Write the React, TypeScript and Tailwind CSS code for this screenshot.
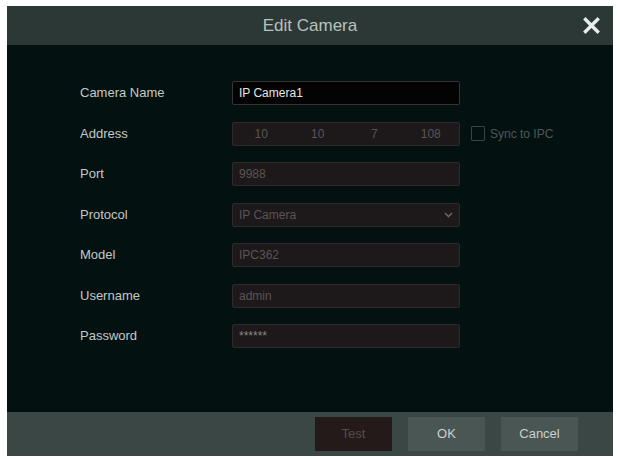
import { ReactNode } from 'react';

const font = { fontFamily: '"Liberation Sans", Arial, sans-serif' };

function Row({ label, children }: { label: string; children: ReactNode }) {
  return (
    <div className="flex items-center h-6">
      <div className="w-[152px] text-[13px] text-[#c4c8c6]">{label}</div>
      {children}
    </div>
  );
}

function Field({ value, dim = true }: { value: string; dim?: boolean }) {
  return (
    <div
      className={
        dim
          ? 'w-[228px] h-6 flex items-center px-[6px] bg-[#1d1819] border border-[#2a2b2a] rounded-[2px] text-[12px] text-[#5b5456]'
          : 'w-[228px] h-6 flex items-center px-[6px] bg-[#030303] border border-[#3a3334] rounded-[2px] text-[12px] text-[#e6e6e6]'
      }
    >
      {value}
    </div>
  );
}

export default function App() {
  return (
    <div className="w-[620px] h-[459px] bg-white pt-[6px] pl-[7px]" style={font}>
      <div className="w-[606px] h-[450px] flex flex-col bg-[#031211]">
        <div className="h-[39px] bg-[#2c3835] flex items-center justify-center relative">
          <span className="text-[17px] text-[#b9c1bd]">Edit Camera</span>
          <svg className="absolute right-[12px] top-[10px]" width="19" height="19" viewBox="0 0 19 19">
            <path d="M3.5 3.5 L15.5 15.5 M15.5 3.5 L3.5 15.5" stroke="#e8ecea" strokeWidth="3.4" strokeLinecap="square" />
          </svg>
        </div>

        <div className="flex-1 flex flex-col gap-[16.5px] pt-[36px] pl-[73px]">
          <Row label="Camera Name">
            <Field value="IP Camera1" dim={false} />
          </Row>
          <Row label="Address">
            <div className="w-[228px] h-6 flex items-center bg-[#1d1819] border border-[#2a2b2a] rounded-[2px] text-[12px] text-[#5b5456]">
              <span className="w-[57px] text-center">10</span>
              <span className="w-[57px] text-center">10</span>
              <span className="w-[57px] text-center">7</span>
              <span className="w-[57px] text-center">108</span>
            </div>
            <div className="flex items-center ml-[11px] gap-[5px]">
              <span className="w-[14px] h-[15px] border border-[#3a4442] rounded-[1px]" />
              <span className="text-[12px] text-[#4e5857]">Sync to IPC</span>
            </div>
          </Row>
          <Row label="Port">
            <Field value="9988" />
          </Row>
          <Row label="Protocol">
            <div className="w-[228px] h-6 flex items-center justify-between px-[6px] bg-[#1d1819] border border-[#2a2b2a] rounded-[2px] text-[12px] text-[#5b5456]">
              <span>IP Camera</span>
              <svg width="9" height="6" viewBox="0 0 9 6">
                <path d="M1 1 L4.5 4.5 L8 1" stroke="#6a6264" strokeWidth="1.6" fill="none" />
              </svg>
            </div>
          </Row>
          <Row label="Model">
            <Field value="IPC362" />
          </Row>
          <Row label="Username">
            <Field value="admin" />
          </Row>
          <Row label="Password">
            <div className="w-[228px] h-6 flex items-center px-[6px] bg-[#1d1819] border border-[#2a2b2a] rounded-[2px] text-[12px] text-[#8a8486]">
              ******
            </div>
          </Row>
        </div>

        <div className="h-[44px] bg-[#3b4744] flex items-center justify-end gap-4 pr-[35px]">
          <button className="w-[77px] h-[34px] bg-[#251a1a] text-[13px] text-[#564c4c]">Test</button>
          <button className="w-[77px] h-[34px] bg-[#4a5653] text-[13px] text-[#c9cfcc]">OK</button>
          <button className="w-[77px] h-[34px] bg-[#4a5653] text-[13px] text-[#c9cfcc]">Cancel</button>
        </div>
      </div>
    </div>
  );
}
